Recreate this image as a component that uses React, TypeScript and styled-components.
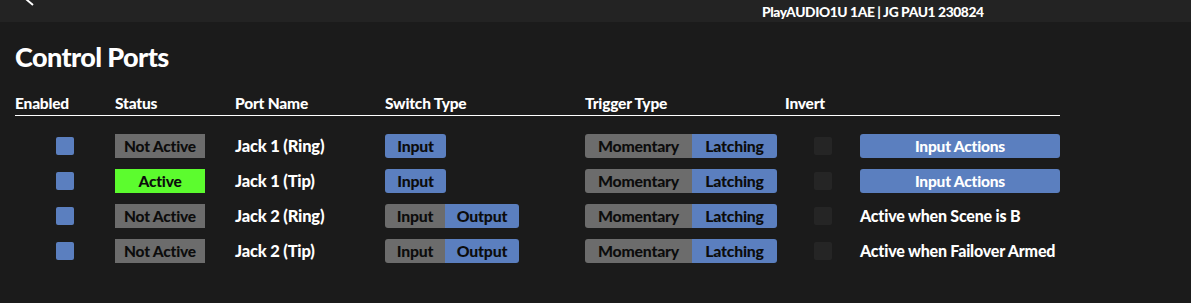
import React from "react";
import styled, { createGlobalStyle } from "styled-components";

const GlobalStyle = createGlobalStyle`
  html, body {
    margin: 0;
    padding: 0;
    background: #1b1b1b;
  }
  body {
    font-family: "Lato", "Noto Sans", sans-serif;
    font-weight: 700;
    color: #ffffff;
  }
`;

const BLUE = "#5b7fbf";
const GRAY = "#6c6c6c";
const GREEN = "#5cfc2e";

const Page = styled.div`
  width: 1191px;
  height: 303px;
  background: #1b1b1b;
  overflow: hidden;
`;

const TopBar = styled.header`
  position: relative;
  height: 22px;
  background: #232323;
  display: flex;
  align-items: center;
  padding-left: 762px;
  box-sizing: border-box;
  overflow: hidden;
`;

const BackIcon = styled.svg`
  position: absolute;
  left: 24px;
  top: -8px;
`;

const DeviceName = styled.span`
  font-size: 13.8px;
  line-height: 22px;
  font-weight: 900;
  letter-spacing: -0.4px;
  padding-top: 1px;
`;

const Content = styled.main`
  padding: 18px 15px 0 15px;
`;

const Title = styled.h1`
  margin: 0;
  font-size: 27px;
  line-height: 34px;
  font-weight: 900;
  letter-spacing: -0.6px;
`;

const Table = styled.div`
  margin-top: 20px;
  width: 1045px;
  display: grid;
  grid-template-columns: 100px 120px 150px 200px 200px 75px 200px;
`;

const HeaderCell = styled.div`
  font-size: 15.5px;
  line-height: 18px;
  font-weight: 900;
  letter-spacing: -0.2px;
  padding-bottom: 3px;
  border-bottom: 1.5px solid #ffffff;
`;

const Spacer = styled.div`
  grid-column: 1 / -1;
  height: 12px;
`;

const Cell = styled.div<{ $center?: boolean }>`
  height: 35px;
  display: flex;
  align-items: center;
  justify-content: ${(p) => (p.$center ? "center" : "flex-start")};
  font-size: 16.5px;
  font-weight: 900;
  letter-spacing: -0.2px;
`;

const CheckBox = styled.div<{ $on?: boolean }>`
  width: 18px;
  height: 18px;
  border-radius: 2px;
  background: ${(p) => (p.$on ? BLUE : "#252525")};
`;

const StatusBadge = styled.div<{ $active?: boolean }>`
  width: 90px;
  height: 24px;
  display: flex;
  align-items: center;
  justify-content: center;
  background: ${(p) => (p.$active ? GREEN : GRAY)};
  color: #0c0c0c;
  font-size: 15.5px;
`;

const Segmented = styled.div`
  display: flex;
  height: 24px;
  border-radius: 3px;
  overflow: hidden;
`;

const Segment = styled.div<{ $selected?: boolean; $w: number }>`
  width: ${(p) => p.$w}px;
  display: flex;
  align-items: center;
  justify-content: center;
  background: ${(p) => (p.$selected ? BLUE : GRAY)};
  color: #0c0c0c;
  font-size: 15.8px;
`;

const ActionButton = styled.div`
  width: 200px;
  height: 24px;
  border-radius: 3px;
  background: ${BLUE};
  color: #ffffff;
  display: flex;
  align-items: center;
  justify-content: center;
  font-size: 15.5px;
`;

const Note = styled.span`
  font-size: 16px;
`;

type Row = {
  enabled: boolean;
  active: boolean;
  name: string;
  output: boolean;
  action: string | null;
};

const rows: Row[] = [
  { enabled: true, active: false, name: "Jack 1 (Ring)", output: false, action: null },
  { enabled: true, active: true, name: "Jack 1 (Tip)", output: false, action: null },
  { enabled: true, active: false, name: "Jack 2 (Ring)", output: true, action: "Active when Scene is B" },
  { enabled: true, active: false, name: "Jack 2 (Tip)", output: true, action: "Active when Failover Armed" },
];

const headers = ["Enabled", "Status", "Port Name", "Switch Type", "Trigger Type", "Invert", ""];

export default function App() {
  return (
    <Page>
      <GlobalStyle />
      <TopBar>
        <BackIcon width="14" height="14" viewBox="0 0 14 14">
          <path d="M9 1 L3 8 L9 13" fill="none" stroke="#ffffff" strokeWidth="2" />
        </BackIcon>
        <DeviceName>PlayAUDIO1U 1AE | JG PAU1 230824</DeviceName>
      </TopBar>
      <Content>
        <Title>Control Ports</Title>
        <Table>
          {headers.map((h, i) => (
            <HeaderCell key={i}>{h}</HeaderCell>
          ))}
          <Spacer />
          {rows.map((r, i) => (
            <React.Fragment key={i}>
              <Cell $center>
                <CheckBox $on={r.enabled} />
              </Cell>
              <Cell>
                <StatusBadge $active={r.active}>{r.active ? "Active" : "Not Active"}</StatusBadge>
              </Cell>
              <Cell>{r.name}</Cell>
              <Cell>
                {r.output ? (
                  <Segmented>
                    <Segment $w={60}>Input</Segment>
                    <Segment $w={74} $selected>
                      Output
                    </Segment>
                  </Segmented>
                ) : (
                  <Segmented>
                    <Segment $w={61} $selected>
                      Input
                    </Segment>
                  </Segmented>
                )}
              </Cell>
              <Cell>
                <Segmented>
                  <Segment $w={107}>Momentary</Segment>
                  <Segment $w={85} $selected>
                    Latching
                  </Segment>
                </Segmented>
              </Cell>
              <Cell $center>
                <CheckBox />
              </Cell>
              <Cell>
                {r.action ? <Note>{r.action}</Note> : <ActionButton>Input Actions</ActionButton>}
              </Cell>
            </React.Fragment>
          ))}
        </Table>
      </Content>
    </Page>
  );
}
